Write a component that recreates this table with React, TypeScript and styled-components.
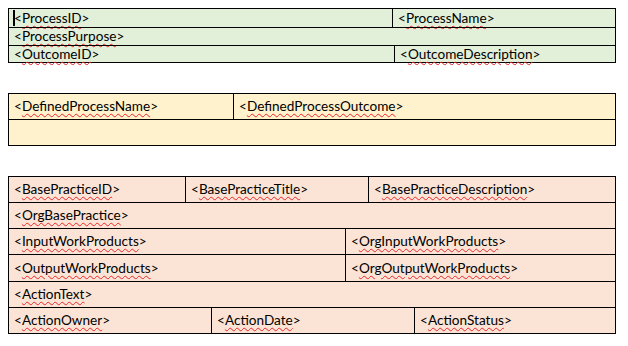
import React from 'react'
import styled, {createGlobalStyle} from 'styled-components'

const GlobalStyle = createGlobalStyle`
	html, body {
		margin: 0;
		padding: 0;
		background: #ffffff;
	}
	body {
		font-family: Lato, 'Liberation Sans', sans-serif;
		color: #000000;
	}
`

type cellType = {
	text?: string
	width?: number
	caret?: boolean
}

type rowType = {
	height: number
	cells: cellType[]
}

type tableType = {
	tone: string
	rows: rowType[]
}

const tables: tableType[] = [
	{
		tone: '#e2efd9',
		rows: [
			{height: 18, cells: [{text: 'ProcessID', width: 383, caret: true}, {text: 'ProcessName'}]},
			{height: 17, cells: [{text: 'ProcessPurpose'}]},
			{height: 16, cells: [{text: 'OutcomeID', width: 385}, {text: 'OutcomeDescription'}]},
		],
	},
	{
		tone: '#fff2cc',
		rows: [
			{height: 25, cells: [{text: 'DefinedProcessName', width: 224}, {text: 'DefinedProcessOutcome'}]},
			{height: 25, cells: [{}]},
		],
	},
	{
		tone: '#fbe4d5',
		rows: [
			{
				height: 25,
				cells: [
					{text: 'BasePracticeID', width: 176},
					{text: 'BasePracticeTitle', width: 183},
					{text: 'BasePracticeDescription'},
				],
			},
			{height: 25, cells: [{text: 'OrgBasePractice'}]},
			{height: 25, cells: [{text: 'InputWorkProducts', width: 336}, {text: 'OrgInputWorkProducts'}]},
			{height: 26, cells: [{text: 'OutputWorkProducts', width: 336}, {text: 'OrgOutputWorkProducts'}]},
			{height: 25, cells: [{text: 'ActionText'}]},
			{
				height: 25,
				cells: [
					{text: 'ActionOwner', width: 202},
					{text: 'ActionDate', width: 203},
					{text: 'ActionStatus'},
				],
			},
		],
	},
]

const App = () => {
	return (
		<>
			<GlobalStyle />
			<Page>
				{tables.map((table, t) => (
					<Table key={t} tone={table.tone}>
						{table.rows.map((row, r) => (
							<Row key={r} h={row.height}>
								{row.cells.map((cell, c) => (
									<Cell key={c} w={cell.width}>
										{cell.caret && <Caret />}
										{cell.text && (
											<>
												&lt;<Field>{cell.text}</Field>&gt;
											</>
										)}
									</Cell>
								))}
							</Row>
						))}
					</Table>
				))}
			</Page>
		</>
	)
}

export default App

const Page = styled.main`
	display: flex;
	flex-direction: column;
	gap: 30px;
	padding: 8px 0 0 8px;
	width: 608px;
`

const Table = styled.section<{tone: string}>`
	display: flex;
	flex-direction: column;
	border: 1px solid #000000;
	background-color: ${(p) => p.tone};
`

const Row = styled.div<{h: number}>`
	display: flex;
	height: ${(p) => p.h}px;

	& + & {
		border-top: 1px solid #000000;
	}
`

const Cell = styled.div<{w?: number}>`
	display: flex;
	align-items: center;
	box-sizing: border-box;
	padding: 0 0 1px 5px;
	font-size: 13.6px;
	line-height: 16px;
	white-space: nowrap;
	flex: ${(p) => (p.w ? `0 0 ${p.w}px` : '1 1 auto')};

	& + & {
		border-left: 1px solid #000000;
	}
`

const Field = styled.span`
	text-decoration: underline wavy #e8262b;
	text-decoration-thickness: 1px;
	text-underline-offset: 2px;
`

const Caret = styled.span`
	display: inline-block;
	width: 2px;
	height: 16px;
	margin: 0 -1px 0 -1px;
	background: #000000;
`
